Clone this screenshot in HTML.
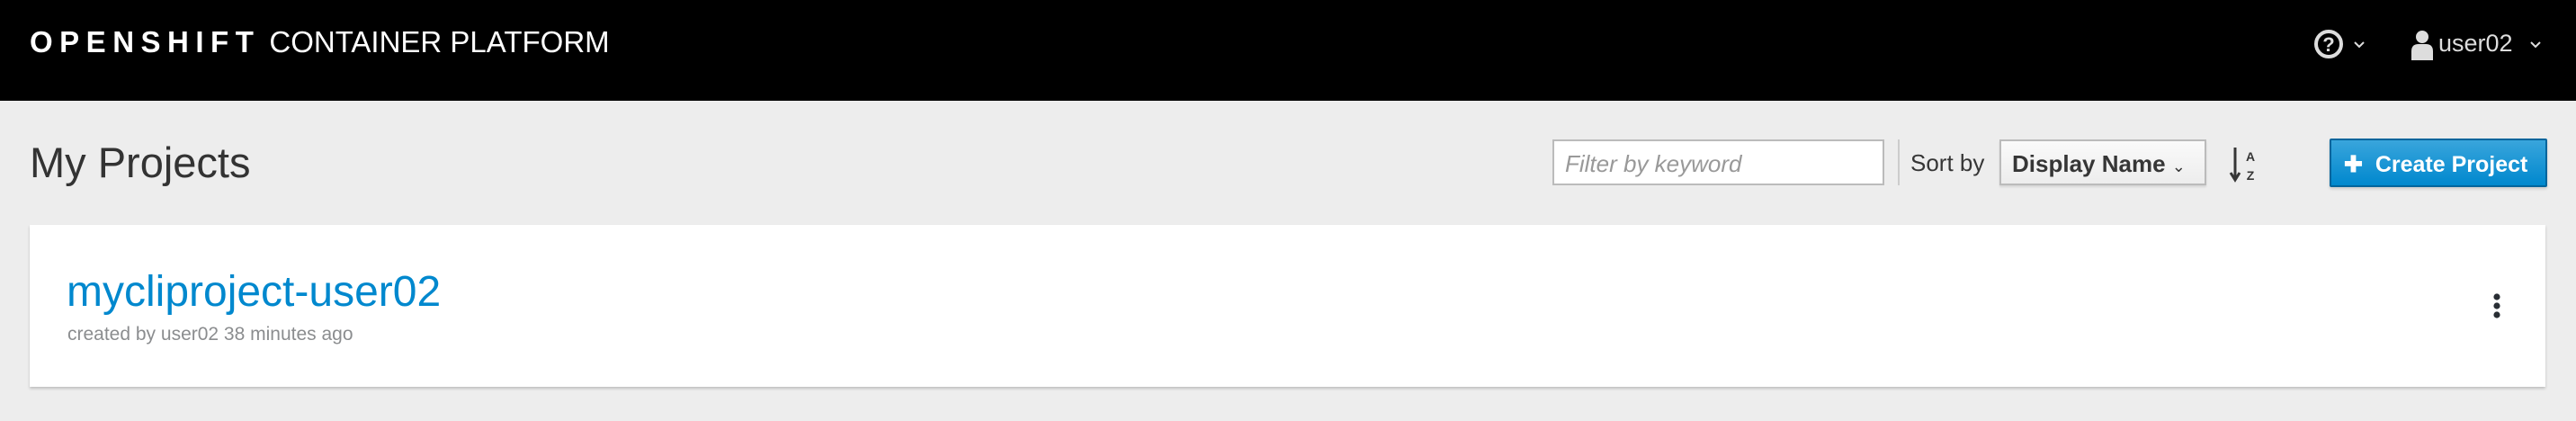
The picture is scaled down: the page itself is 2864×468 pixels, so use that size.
<!DOCTYPE html>
<html><head><meta charset="utf-8"><style>
*{box-sizing:border-box;margin:0;padding:0}
body{width:2864px;height:468px;background:#ededed;font-family:"Liberation Sans",sans-serif;position:relative;overflow:hidden}
.hdr{position:absolute;left:0;top:0;width:2864px;height:112px;background:#000}
.abs{position:absolute;white-space:nowrap}
.logo{left:33px;top:28px;color:#fff;font-size:33px;line-height:38px}
.logo b{letter-spacing:7.5px;font-weight:700;margin-right:10px}
.input{left:1726px;top:155px;width:369px;height:51px;background:#fff;border:2px solid #bbb;font-style:italic;color:#999;font-size:26px;padding:10px 12px}
.sep{left:2110px;top:155px;width:2px;height:51px;background:#ccc}
.sel{left:2223px;top:155px;width:230px;height:51px;background:linear-gradient(#fafafa,#ededed);border:2px solid #bbb;font-size:26px;color:#363636;font-weight:700;padding:10px 12px;box-shadow:0 2px 2px rgba(0,0,0,.1)}
.btn{left:2590px;top:154px;width:242px;height:54px;background:linear-gradient(#39a5dc,#0088ce);border:2px solid #00659c;border-radius:2px;color:#fff;font-size:25px;font-weight:700;padding:12px 0 0 14px;box-shadow:0 2px 3px rgba(0,0,0,.15)}
.card{left:33px;top:250px;width:2797px;height:180px;background:#fff;box-shadow:0 2px 3px rgba(0,0,0,.2)}
</style></head><body>
<div class="hdr"></div>
<div class="abs logo"><b>OPENSHIFT</b>CONTAINER PLATFORM</div>
<svg class="abs" style="left:2572px;top:32px" width="34" height="34" viewBox="0 0 34 34"><circle cx="17" cy="17" r="14" fill="none" stroke="#ddd" stroke-width="4"/><text x="17" y="25" text-anchor="middle" font-family="Liberation Sans" font-weight="700" font-size="22" fill="#ddd">?</text></svg>
<svg class="abs" style="left:2616px;top:45px" width="14" height="10"><path d="M2 2l5 5 5-5" fill="none" stroke="#ddd" stroke-width="2"/></svg>
<svg class="abs" style="left:2679px;top:33px" width="28" height="34" viewBox="0 0 28 34"><circle cx="14" cy="8" r="7" fill="#ddd"/><path d="M2 34V24q0-8 8-8h8q8 0 8 8v10z" fill="#ddd"/></svg>
<div class="abs" style="left:2711px;top:33px;color:#ddd;font-size:27px">user02</div>
<svg class="abs" style="left:2812px;top:45px" width="14" height="10"><path d="M2 2l5 5 5-5" fill="none" stroke="#ddd" stroke-width="2"/></svg>
<div class="abs" style="left:33px;top:153px;font-size:47px;color:#333;font-weight:300">My Projects</div>
<div class="abs input">Filter by keyword</div>
<div class="abs sep"></div>
<div class="abs" style="left:2124px;top:166px;font-size:26px;color:#363636">Sort by</div>
<div class="abs sel">Display Name <span style="font-weight:400;font-size:18px">&#8964;</span></div>
<svg class="abs" style="left:2478px;top:162px" width="36" height="42" viewBox="0 0 36 42"><path d="M7 2v34M2 30l5 8 5-8" fill="none" stroke="#363636" stroke-width="3"/><text x="24" y="17" text-anchor="middle" font-family="Liberation Sans" font-weight="700" font-size="14" fill="#363636">A</text><text x="24" y="38" text-anchor="middle" font-family="Liberation Sans" font-weight="700" font-size="14" fill="#363636">Z</text></svg>
<div class="abs btn">✚&nbsp; Create Project</div>
<div class="abs card"></div>
<div class="abs" style="left:74px;top:297px;font-size:48px;color:#0088ce">mycliproject-user02</div>
<div class="abs" style="left:75px;top:360px;font-size:21px;color:#8b8d8f">created by user02 38 minutes ago</div>
<svg class="abs" style="left:2769px;top:325px" width="14" height="32"><circle cx="7" cy="5" r="3.6" fill="#292e34"/><circle cx="7" cy="15" r="3.6" fill="#292e34"/><circle cx="7" cy="25" r="3.6" fill="#292e34"/></svg>
</body></html>
